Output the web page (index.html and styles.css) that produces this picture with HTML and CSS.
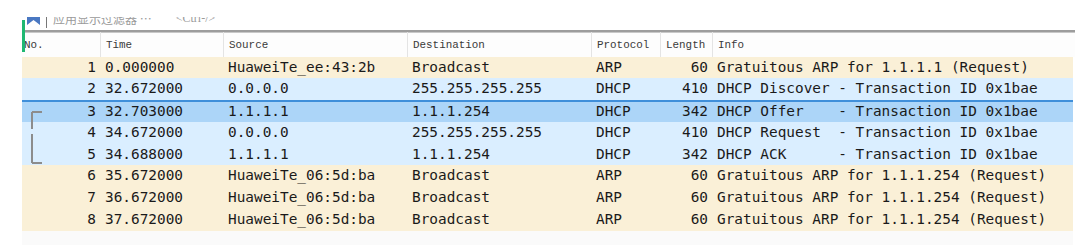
FILE: index.html
```html
<!DOCTYPE html>
<html lang="en">
<head>
    <meta charset="UTF-8">
    <title>Packet list</title>
    <link rel="stylesheet" href="styles.css">
</head>
<body>
    <div class="pane">
        <div class="focus"></div>
        <div class="filter">
            <div class="filter-line">
                <svg class="bookmark" width="13" height="14" viewBox="0 0 13 14">
                    <path d="M0 0H13V14L6.5 9L0 14Z" fill="#4a78c2"/>
                </svg>
                <span class="sep"></span>
                <span class="hint">应用显示过滤器 …</span>
                <span class="hint key">&lt;Ctrl-/&gt;</span>
            </div>
        </div>
        <div class="head row">
            <span class="c no">No.</span>
            <span class="c">Time</span>
            <span class="c">Source</span>
            <span class="c">Destination</span>
            <span class="c">Protocol</span>
            <span class="c">Length</span>
            <span class="c">Info</span>
        </div>
        <div class="list">
            <svg class="related" width="12" height="53" viewBox="0 0 12 53">
                <path d="M1 1H11M1 1V18M1 23V52M1 52H11" stroke="#8c8c8c" stroke-width="2" fill="none"/>
            </svg>
            <div class="row arp">
                <span class="c num">1</span><span class="c">0.000000</span><span class="c">HuaweiTe_ee:43:2b</span><span class="c">Broadcast</span><span class="c">ARP</span><span class="c num">60</span><span class="c">Gratuitous ARP for 1.1.1.1 (Request)</span>
            </div>
            <div class="row dhcp">
                <span class="c num">2</span><span class="c">32.672000</span><span class="c">0.0.0.0</span><span class="c">255.255.255.255</span><span class="c">DHCP</span><span class="c num">410</span><span class="c">DHCP Discover - Transaction ID 0x1bae</span>
            </div>
            <div class="row dhcp selected">
                <span class="c num">3</span><span class="c">32.703000</span><span class="c">1.1.1.1</span><span class="c">1.1.1.254</span><span class="c">DHCP</span><span class="c num">342</span><span class="c">DHCP Offer    - Transaction ID 0x1bae</span>
            </div>
            <div class="row dhcp">
                <span class="c num">4</span><span class="c">34.672000</span><span class="c">0.0.0.0</span><span class="c">255.255.255.255</span><span class="c">DHCP</span><span class="c num">410</span><span class="c">DHCP Request  - Transaction ID 0x1bae</span>
            </div>
            <div class="row dhcp">
                <span class="c num">5</span><span class="c">34.688000</span><span class="c">1.1.1.1</span><span class="c">1.1.1.254</span><span class="c">DHCP</span><span class="c num">342</span><span class="c">DHCP ACK      - Transaction ID 0x1bae</span>
            </div>
            <div class="row arp">
                <span class="c num">6</span><span class="c">35.672000</span><span class="c">HuaweiTe_06:5d:ba</span><span class="c">Broadcast</span><span class="c">ARP</span><span class="c num">60</span><span class="c">Gratuitous ARP for 1.1.1.254 (Request)</span>
            </div>
            <div class="row arp">
                <span class="c num">7</span><span class="c">36.672000</span><span class="c">HuaweiTe_06:5d:ba</span><span class="c">Broadcast</span><span class="c">ARP</span><span class="c num">60</span><span class="c">Gratuitous ARP for 1.1.1.254 (Request)</span>
            </div>
            <div class="row arp">
                <span class="c num">8</span><span class="c">37.672000</span><span class="c">HuaweiTe_06:5d:ba</span><span class="c">Broadcast</span><span class="c">ARP</span><span class="c num">60</span><span class="c">Gratuitous ARP for 1.1.1.254 (Request)</span>
            </div>
        </div>
        <div class="empty"></div>
    </div>
</body>
</html>
```

FILE: styles.css
```css
*{
    padding: 0;
    margin: 0;
    box-sizing: border-box;
}
body{
    background-color: #fff;
    font-family: "DejaVu Sans Mono", monospace;
    color: #1a1a1a;
}
.pane{
    position: relative;
    margin-left: 22px;
    width: 1053px;
    padding-top: 17px;
}
.focus{
    position: absolute;
    left: 0;
    top: 20px;
    width: 3px;
    height: 32px;
    background-color: #1fb872;
}
.filter{
    height: 13px;
    overflow: hidden;
}
.filter-line{
    display: flex;
    align-items: center;
    height: 20px;
    margin-top: -9px;
    padding-left: 5px;
}
.bookmark{
    display: block;
}
.sep{
    width: 1px;
    height: 20px;
    background-color: #777;
    margin-left: 6px;
    margin-right: 6px;
}
.hint{
    font-family: "Noto Sans CJK SC", sans-serif;
    font-size: 12px;
    color: #9a9a9a;
}
.key{
    margin-left: 24px;
    font-family: "Liberation Serif", serif;
}
.row{
    display: grid;
    grid-template-columns: 78px 123px 184px 184px 69px 52px 1fr;
    height: 21.75px;
    line-height: 21.75px;
    font-size: 14.4px;
    white-space: pre;
    width: 1051px;
}
.c{
    padding-left: 5px;
    overflow: hidden;
}
.num{
    text-align: right;
    padding-left: 0;
    padding-right: 4px;
}
.head{
    height: 26.7px;
    line-height: 22px;
    width: 1053px;
    border-top: 2px solid #9d9d9d;
    box-shadow: inset 0 1px 0 #c8c8c8;
    font-family: "Liberation Mono", monospace;
    font-size: 10.9px;
    color: #3a3a3a;
    background-color: #fdfdfd;
}
.head .c{
    border-left: 1px solid #e4e4e4;
    padding-top: 2px;
}
.head .no{
    border-left: none;
    padding-left: 2px;
}
.list{
    position: relative;
}
.related{
    position: absolute;
    left: 9px;
    top: 54px;
}
.arp{
    background-color: #faf0d7;
}
.dhcp{
    background-color: #daeeff;
}
.dhcp.selected{
    background-color: #acd5f8;
    border-top: 2px solid #3f8fda;
    line-height: 19.75px;
}
.empty{
    height: 15px;
    width: 1051px;
    background-color: #fafafa;
}
```
